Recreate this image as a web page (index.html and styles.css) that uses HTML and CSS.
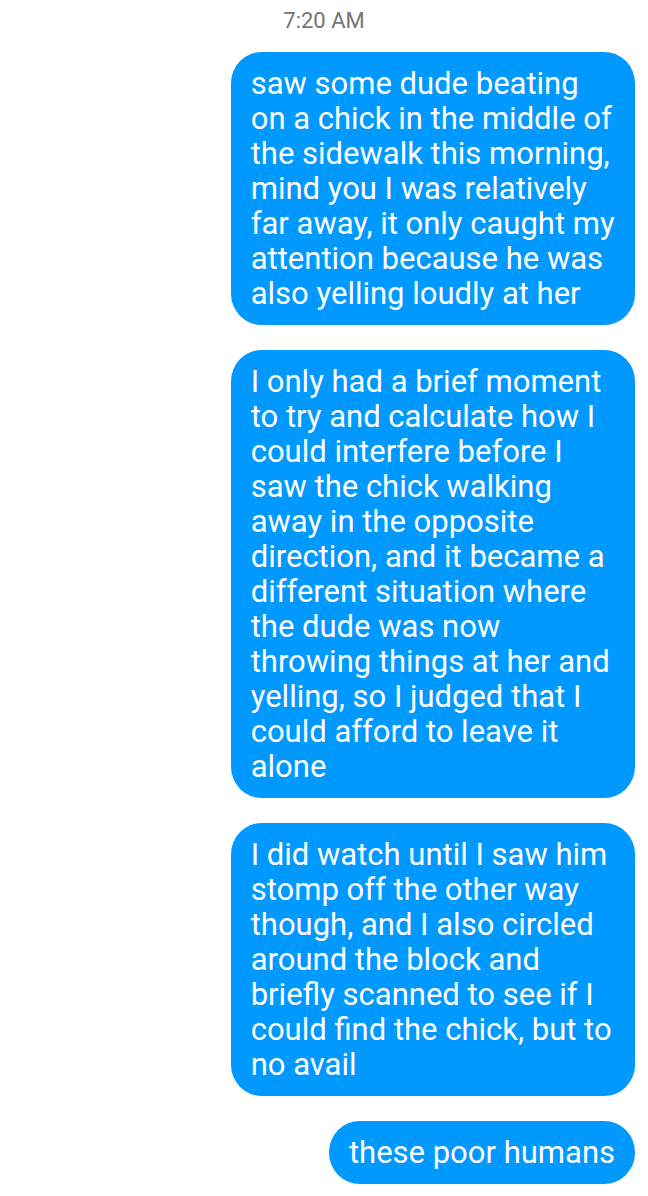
FILE: index.html
```html
<!DOCTYPE html>
<html lang="en">
<head>
<meta charset="utf-8">
<meta name="viewport" content="width=device-width, initial-scale=1">
<title>Messages</title>
<link rel="stylesheet" href="styles.css">
</head>
<body>
<main class="thread">
  <time class="timestamp" datetime="07:20">7:20 AM</time>
  <p class="bubble">saw some dude beating on a chick in the middle of the sidewalk this morning, mind you I was relatively far away, it only caught my attention because he was also yelling loudly at her</p>
  <p class="bubble">I only had a brief moment to try and calculate how I could interfere before I saw the chick walking away in the opposite direction, and it became a different situation where the dude was now throwing things at her and yelling, so I judged that I could afford to leave it alone</p>
  <p class="bubble">I did watch until I saw him stomp off the other way though, and I also circled around the block and briefly scanned to see if I could find the chick, but to no avail</p>
  <p class="bubble">these poor humans</p>
</main>
</body>
</html>
```

FILE: styles.css
```css
* {
  box-sizing: border-box;
}

body {
  margin: 0;
  background: #ffffff;
  font-family: Roboto, "Liberation Sans", sans-serif;
}

.thread {
  display: flex;
  flex-direction: column;
  align-items: flex-end;
  gap: 25px;
  padding: 9px 13px 12px;
}

.timestamp {
  align-self: center;
  margin-bottom: -6px;
  color: #757575;
  font-size: 22px;
  line-height: 24px;
}

.bubble {
  max-width: 65%;
  margin: 0;
  padding: 14px 20px;
  border-radius: 31px;
  background: #0099ff;
  color: #ffffff;
  font-size: 31px;
  line-height: 35px;
}
```
